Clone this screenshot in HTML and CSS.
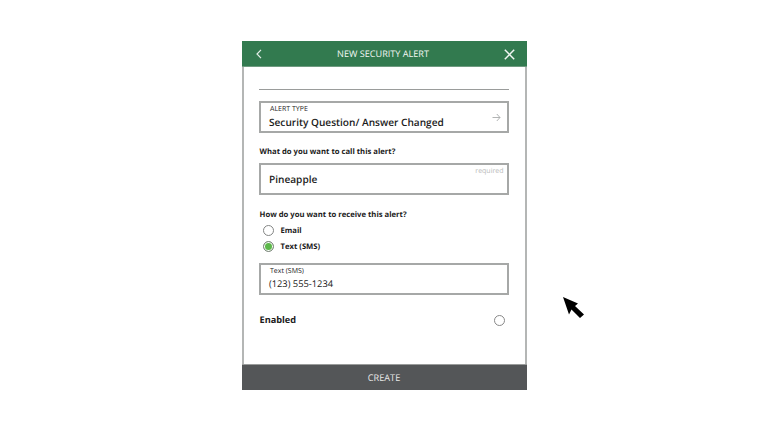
FILE: index.html
```html
<!DOCTYPE html>
<html lang="en">
<head>
<meta charset="utf-8">
<title>New Security Alert</title>
<link rel="stylesheet" href="styles.css">
</head>
<body>
<main class="panel">
  <header class="head">
    <svg class="back" width="6" height="10" viewBox="0 0 6 10"><path d="M5 .8 1 5l4 4.2" fill="none" stroke="#e4efe8" stroke-width="1.2"/></svg>
    <h1 class="title">NEW SECURITY ALERT</h1>
    <svg class="close" width="11" height="11" viewBox="0 0 11 11"><path d="M.8.8l9.4 9.4M10.2.8.8 10.2" fill="none" stroke="#f2f7f4" stroke-width="1.5"/></svg>
  </header>
  <div class="body">
    <div class="rule"></div>
    <div class="field type">
      <span class="label">ALERT TYPE</span>
      <span class="value">Security Question/ Answer Changed</span>
      <svg class="arrow" width="9" height="9" viewBox="0 0 9 9"><path d="M.5 4.5h7.5M4.8 1 8 4.5 4.8 8" fill="none" stroke="#a9acab" stroke-width=".9"/></svg>
    </div>
    <p class="question q1">What do you want to call this alert?</p>
    <div class="field name">
      <span class="value">Pineapple</span>
      <span class="req">required</span>
    </div>
    <p class="question q2">How do you want to receive this alert?</p>
    <div class="options">
      <div class="option"><span class="radio"></span><span>Email</span></div>
      <div class="option"><span class="radio on"></span><span>Text (SMS)</span></div>
    </div>
    <div class="field sms">
      <span class="label mixed">Text (SMS)</span>
      <span class="value phone">(123) 555-1234</span>
    </div>
    <div class="enabled">
      <span>Enabled</span>
      <span class="radio small"></span>
    </div>
  </div>
  <button class="create">CREATE</button>
</main>
<svg class="cursor" width="23" height="23" viewBox="0 0 23 23"><path d="M1 1 16 7.500 13 10 22 18.500 18 22 9.500 13.500 7 18.500Z" fill="#000"/></svg>
</body>
</html>
```
FILE: styles.css
```css
* { box-sizing: border-box; }
html, body { margin: 0; height: 432px; overflow: hidden; background: #fff; }
body { font-family: "Open Sans", "Liberation Sans", sans-serif; color: #1b1b1b; padding-top: 41px; position: relative; text-rendering: geometricPrecision; }
.panel { width: 285px; height: 349px; margin-left: 241.500px; display: flex; flex-direction: column; border-left: 2px solid #b4b6b5; border-right: 2px solid #b4b6b5; }
.head { height: 26px; margin: 0 -2px; flex: none; background: #327a4f; border-bottom: 1px solid #6f9a80; display: flex; align-items: center; justify-content: space-between; padding: 0 12px 0 14px; color: #f2f7f4; }
.title { margin: 0 0 0 1px; font-size: 9.100px; font-weight: 500; line-height: 25px; }
.back { margin-top: 1px; }
.close { margin-top: 1px; }
.body { flex: 1; padding: 22px 16px 0 15px; }
.rule { height: 1px; background: #9a9c9b; }
.field { position: relative; height: 32px; border: 2px solid #a6a8a7; display: flex; flex-direction: column; padding-left: 8.500px; }
.type { margin-top: 11px; padding-top: 1.500px; }
.label { font-size: 7px; font-weight: 500; line-height: 10px; margin-left: 1px; }
.value { font-size: 10.100px; font-weight: 600; line-height: 14px; }
.arrow { position: absolute; right: 6px; top: 10px; }
.question { margin: 0; font-size: 7.700px; font-weight: 700; line-height: 12px; padding-left: 1px; }
.q1 { margin-top: 12.500px; }
.name { margin-top: 5.500px; justify-content: center; padding-top: .5px; }
.req { position: absolute; right: 3px; top: 1px; font-size: 7px; line-height: 11px; color: #b9bbba; }
.q2 { margin-top: 14px; }
.options { margin-top: 4px; padding-left: 4px; display: flex; flex-direction: column; gap: 5px; }
.option { display: flex; align-items: center; gap: 7px; height: 11px; font-size: 7.700px; font-weight: 700; }
.radio { width: 11px; height: 11px; flex: none; border-radius: 50%; border: 1px solid #838584; background: #fff; }
.radio.on { background: #5cb84a; box-shadow: inset 0 0 0 1px #fff; }
.sms { margin-top: 11px; padding-top: 1.500px; }
.mixed { font-weight: 500; }
.phone { font-weight: 400; font-size: 9.300px; }
.enabled { margin-top: 18px; display: flex; align-items: center; justify-content: space-between; padding: 0 4px 0 1px; font-size: 9.200px; font-weight: 700; }
.small { border-color: #888; margin-top: 2px; }
.create { height: 26px; margin: 0 -2px; flex: none; border: 0; border-top: 1px solid #9a9c9b; background: #545658; color: #e8e8e8; font: 500 9.200px "Open Sans", "Liberation Sans", sans-serif; text-rendering: geometricPrecision; }
.cursor { position: absolute; left: 562px; top: 296px; }
```
